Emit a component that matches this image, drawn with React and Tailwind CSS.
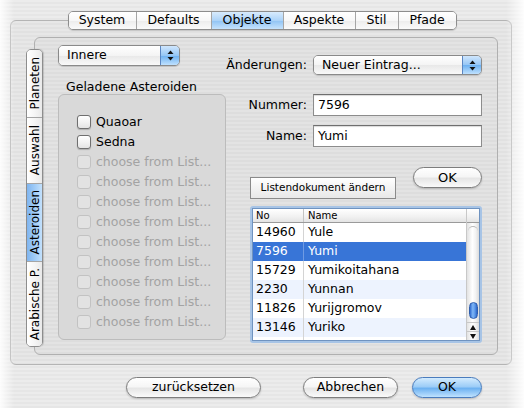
import React from "react";

const stripes =
  "bg-[repeating-linear-gradient(180deg,#ececec_0px,#ececec_2px,#e6e6e6_2px,#e6e6e6_4px)]";

const TABS = [
  { label: "System", w: "w-[67px]" },
  { label: "Defaults", w: "w-[75px]" },
  { label: "Objekte", w: "w-[72px]", active: true },
  { label: "Aspekte", w: "w-[72px]" },
  { label: "Stil", w: "w-[43px]" },
  { label: "Pfade", w: "w-[58px]" },
];

const SIDE_TABS = [
  { label: "Planeten", h: "h-[67px]" },
  { label: "Auswahl", h: "h-[66px]" },
  { label: "Asteroiden", h: "h-[78px]", active: true },
  { label: "Arabische P.", h: "h-[85px]" },
];

const ROWS = [
  { no: "14960", name: "Yule" },
  { no: "7596", name: "Yumi", selected: true },
  { no: "15729", name: "Yumikoitahana" },
  { no: "2230", name: "Yunnan", alt: true },
  { no: "11826", name: "Yurijgromov" },
  { no: "13146", name: "Yuriko", alt: true },
];

const Arrows = ({ className = "" }) => (
  <svg width="7" height="11" viewBox="0 0 7 11" className={className}>
    <path d="M3.5 0.5 L6.5 4 L0.5 4 Z" fill="#111" />
    <path d="M3.5 10.5 L6.5 7 L0.5 7 Z" fill="#111" />
  </svg>
);

const Popup = ({ label, className }) => (
  <div
    className={`shrink-0 flex items-stretch rounded-[5px] border border-[#8a8a8a] overflow-hidden shadow-[0_1px_1px_rgba(0,0,0,0.15)] ${className}`}
  >
    <div className="flex-1 flex items-center pl-[8px] bg-[linear-gradient(180deg,#ffffff_0%,#f4f4f4_50%,#e8e8e8_51%,#f9f9f9_100%)] text-[12.5px] text-black whitespace-nowrap">
      {label}
    </div>
    <div className="w-[19px] flex items-center justify-center border-l border-[#5b86c2] bg-[linear-gradient(180deg,#cfe6fd_0%,#95c6f5_50%,#6cb0f1_51%,#bfe1fe_100%)]">
      <Arrows />
    </div>
  </div>
);

const PushButton = ({ children, blue, className }) => (
  <button
    className={`rounded-full border text-[12.5px] text-black flex items-center justify-center shadow-[0_1px_2px_rgba(0,0,0,0.2)] ${
      blue
        ? "border-[#4a7cbd] bg-[linear-gradient(180deg,#d3ebfe_0%,#9dcdf7_45%,#6eb2f1_55%,#bfe2fe_100%)]"
        : "border-[#7d7d7d] bg-[linear-gradient(180deg,#ffffff_0%,#f6f6f6_45%,#e6e6e6_55%,#fafafa_100%)]"
    } ${className}`}
  >
    {children}
  </button>
);

const Check = ({ label, disabled }) => (
  <div className="flex items-center h-[20px]">
    <span
      className={`w-[14px] h-[14px] rounded-[3px] border ${
        disabled
          ? "border-[#c2c2c2] bg-[#e2e2e2]"
          : "border-[#6f6f6f] bg-[linear-gradient(180deg,#ffffff_0%,#f0f0f0_60%,#e4e4e4_100%)] shadow-[0_1px_1px_rgba(0,0,0,0.2)]"
      }`}
    />
    <span
      className={`ml-[5px] text-[12.5px] ${disabled ? "text-[#a3a3a3]" : "text-black"}`}
    >
      {label}
    </span>
  </div>
);

export default function App() {
  return (
    <div
      className={`relative w-[524px] h-[408px] overflow-hidden ${stripes} font-['DejaVu_Sans',sans-serif] flex flex-col pt-[11px]`}
    >
      {/* top tabs */}
      <div className="relative z-10 flex justify-center">
        <div className="flex h-[19px] rounded-[5px] border border-[#8d8d8d] overflow-hidden shadow-[0_1px_1px_rgba(0,0,0,0.15)]">
          {TABS.map((t, i) => (
            <div
              key={t.label}
              className={`${t.w} flex items-center justify-center text-[12.5px] text-black ${
                i > 0 ? "border-l border-[#a5a5a5]" : ""
              } ${
                t.active
                  ? "bg-[linear-gradient(180deg,#d8ebfd_0%,#acd3f8_50%,#8fc3f4_51%,#c6e3fd_100%)]"
                  : "bg-[linear-gradient(180deg,#ffffff_0%,#f7f7f7_50%,#ececec_51%,#fafafa_100%)]"
              }`}
            >
              {t.label}
            </div>
          ))}
        </div>
      </div>

      {/* outer panel */}
      <div className="-mt-[10px] mx-[10px] w-[502px] h-[345px] rounded-[6px] border border-[#b4b4b4] bg-[repeating-linear-gradient(180deg,#e7e7e7_0px,#e7e7e7_2px,#e1e1e1_2px,#e1e1e1_4px)] pt-[16px] pl-[23px] pr-[13px]">
        {/* inner panel */}
        <div className="flex h-[318px] rounded-[6px] border border-[#b0b0b0] bg-[repeating-linear-gradient(180deg,#e3e3e3_0px,#e3e3e3_2px,#dddddd_2px,#dddddd_4px)]">
          {/* side tabs */}
          <div className="-ml-[9px] mt-[11px] w-[17px] flex flex-col self-start rounded-[5px] border border-[#8d8d8d] overflow-hidden shadow-[1px_0_1px_rgba(0,0,0,0.15)]">
            {SIDE_TABS.map((t, i) => (
              <div
                key={t.label}
                className={`${t.h} flex items-center justify-center ${
                  i > 0 ? "border-t border-[#a5a5a5]" : ""
                } ${
                  t.active
                    ? "bg-[linear-gradient(90deg,#7fb5f0_0%,#9fcbf7_50%,#c3e1fd_100%)]"
                    : "bg-[linear-gradient(90deg,#ffffff_0%,#f5f5f5_50%,#e9e9e9_100%)]"
                }`}
              >
                <span className="[writing-mode:vertical-rl] rotate-180 text-[12px] text-black leading-none">
                  {t.label}
                </span>
              </div>
            ))}
          </div>

          {/* left column */}
          <div className="ml-[15px] w-[168px] flex flex-col pt-[7px]">
            <Popup label="Innere" className="w-[122px] h-[21px]" />
            <div className="mt-[14px] h-[14px] pl-[8px] text-[12.5px] leading-[14px] text-black whitespace-nowrap">
              Geladene Asteroiden
            </div>
            <div className="h-[246px] rounded-[6px] border border-[#bcbcbc] bg-[#d9d9d9] pt-[17px] pl-[18px]">
              <Check label="Quaoar" />
              <Check label="Sedna" />
              {Array.from({ length: 9 }).map((_, i) => (
                <Check key={i} label="choose from List..." disabled />
              ))}
            </div>
          </div>

          {/* right column */}
          <div className="ml-[14px] w-[242px] flex flex-col pt-[17px]">
            <div className="flex items-center justify-end h-[20px]">
              <span className="shrink-0 mr-[6px] text-[12.5px] text-black whitespace-nowrap">Änderungen:</span>
              <Popup label="Neuer Eintrag..." className="w-[169px] h-[20px]" />
            </div>

            <div className="mt-[19px] flex items-center h-[22px]">
              <span className="w-[67px] text-right text-[12.5px] text-black">Nummer:</span>
              <div className="ml-[6px] w-[169px] h-[22px] border border-[#8c8c8c] border-t-[#6f6f6f] bg-white flex items-center pl-[4px] text-[12.5px] shadow-[inset_0_1px_1px_rgba(0,0,0,0.15)]">
                7596
              </div>
            </div>
            <div className="mt-[9px] flex items-center h-[22px]">
              <span className="w-[67px] text-right text-[12.5px] text-black">Name:</span>
              <div className="ml-[6px] w-[169px] h-[22px] border border-[#8c8c8c] border-t-[#6f6f6f] bg-white flex items-center pl-[4px] text-[12.5px] shadow-[inset_0_1px_1px_rgba(0,0,0,0.15)]">
                Yumi
              </div>
            </div>

            <div className="mt-[20px] flex items-start">
              <button className="mt-[10px] ml-[10px] w-[146px] h-[22px] border border-[#8a8a8a] bg-[linear-gradient(180deg,#ffffff_0%,#f3f3f3_50%,#e8e8e8_100%)] text-[10.5px] text-black flex items-center justify-center">
                Listendokument ändern
              </button>
              <PushButton className="ml-auto w-[69px] h-[21px] text-[13px]">OK</PushButton>
            </div>

            {/* table */}
            <div className="mt-[7px] ml-[10px] w-[232px] h-[137px] p-[2px] rounded-[3px] bg-[#a7c4e6]">
              <div className="h-full flex bg-white border border-[#6f93c0] overflow-hidden">
                <div className="flex-1 flex flex-col">
                  <div className="h-[14px] flex border-b border-[#9a9a9a] bg-[linear-gradient(180deg,#ffffff_0%,#f1f1f1_60%,#e4e4e4_100%)] text-[10px] leading-[14px] text-black">
                    <span className="w-[51px] pl-[3px] border-r border-[#c4c4c4]">No</span>
                    <span className="pl-[4px]">Name</span>
                  </div>
                  {ROWS.map((r) => (
                    <div
                      key={r.no}
                      className={`h-[19px] flex items-center text-[12.5px] ${
                        r.selected
                          ? "bg-[#3875d7] text-white"
                          : r.alt
                          ? "bg-[#edf3fe] text-black"
                          : "bg-white text-black"
                      }`}
                    >
                      <span
                        className={`w-[51px] h-full flex items-center pl-[3px] border-r ${
                          r.selected ? "border-[#6f9be3]" : "border-[#d4d4d4]"
                        }`}
                      >
                        {r.no}
                      </span>
                      <span className="pl-[4px]">{r.name}</span>
                    </div>
                  ))}
                  <div className="flex-1 flex">
                    <span className="w-[51px] border-r border-[#d4d4d4]" />
                  </div>
                </div>
                {/* scrollbar */}
                <div className="w-[13px] flex flex-col border-l border-[#c8c8c8]">
                  <div className="h-[14px] border-b border-[#9a9a9a] bg-[linear-gradient(180deg,#ffffff_0%,#f1f1f1_60%,#e4e4e4_100%)]" />
                  <div className="flex-1 flex flex-col items-center bg-[linear-gradient(90deg,#e2e2e2_0%,#ffffff_45%,#f4f4f4_70%,#dcdcdc_100%)]">
                    <div className="mt-[3px] w-[10px] h-[6px] rounded-t-full border-t border-[#b8b8b8]" />
                    <div className="flex-1" />
                    <div className="w-[9px] h-[17px] rounded-full border border-[#2f5fae] bg-[linear-gradient(90deg,#2f6bd0_0%,#7fb6f6_40%,#5a98ea_70%,#2b63c6_100%)]" />
                    <div className="mt-[3px] h-[9px] w-full flex items-center justify-center border-t border-[#c8c8c8]">
                      <svg width="6" height="5" viewBox="0 0 6 5">
                        <path d="M3 0 L6 5 L0 5 Z" fill="#111" />
                      </svg>
                    </div>
                    <div className="h-[9px] w-full flex items-center justify-center border-t border-[#c8c8c8]">
                      <svg width="6" height="5" viewBox="0 0 6 5">
                        <path d="M3 5 L6 0 L0 0 Z" fill="#111" />
                      </svg>
                    </div>
                  </div>
                </div>
              </div>
            </div>
          </div>
        </div>
      </div>

      {/* bottom buttons */}
      <div className="mt-[12px] flex justify-end pr-[42px]">
        <PushButton className="w-[135px] h-[21px]">zurücksetzen</PushButton>
        <PushButton className="ml-[42px] w-[95px] h-[21px]">Abbrechen</PushButton>
        <PushButton blue className="ml-[14px] w-[70px] h-[21px]">
          OK
        </PushButton>
      </div>

      {/* soft window edge */}
      <div className="pointer-events-none absolute inset-0 bg-[linear-gradient(90deg,rgba(255,255,255,0.9)_0px,rgba(255,255,255,0)_14px,rgba(255,255,255,0)_506px,rgba(255,255,255,0.9)_524px)]" />
    </div>
  );
}
